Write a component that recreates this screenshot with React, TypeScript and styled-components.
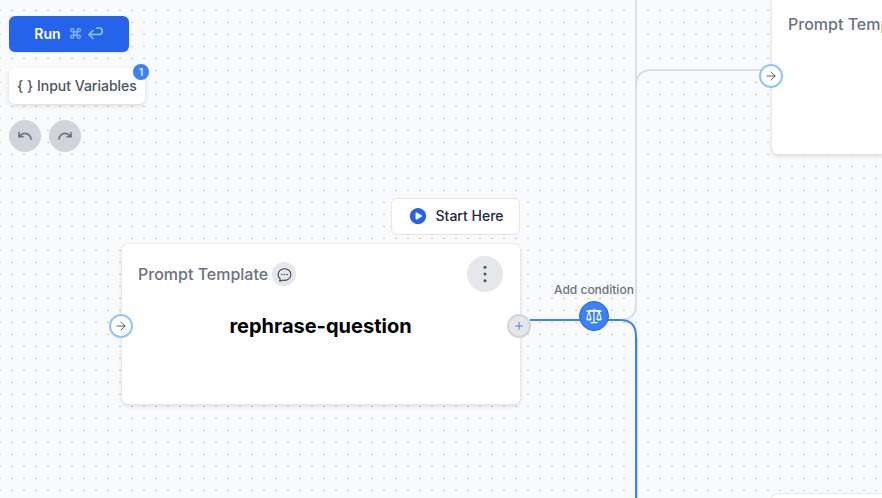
import React from 'react';
import styled, { createGlobalStyle } from 'styled-components';
import { Command, Plus, ArrowRight, Undo, Redo } from 'lucide-react';
import { HiPlayCircle, HiOutlineChatBubbleOvalLeftEllipsis, HiScale } from 'react-icons/hi2';

const GlobalStyle = createGlobalStyle`
  html, body {
    margin: 0;
    padding: 0;
    overflow: hidden;
  }
  body {
    font-family: 'Inter', 'Liberation Sans', sans-serif;
  }
`;

const ReturnIcon = () => (
  <svg width="16" height="13" viewBox="0 0 16 13" fill="none" stroke="currentColor" strokeWidth="1.6" strokeLinecap="round" strokeLinejoin="round">
    <path d="M1 7.5H11a3.2 3.2 0 0 0 0-6.5H8.5" />
    <path d="M5 3.5L1 7.5L5 11.5" />
  </svg>
);

const KebabIcon = () => (
  <svg width="4" height="18" viewBox="0 0 4 18" fill="#4b5563">
    <circle cx="2" cy="2.3" r="1.5" />
    <circle cx="2" cy="9" r="1.5" />
    <circle cx="2" cy="15.7" r="1.5" />
  </svg>
);

const App = () => {
  return (
    <Canvas>
      <GlobalStyle />
      <Edges width={882} height={498} viewBox="0 0 882 498" fill="none">
        <path d="M636 0V304Q636 320 620 320H600" stroke="#dcdee2" strokeWidth="2" />
        <path d="M636 304V86Q636 70 652 70H762" stroke="#dcdee2" strokeWidth="2" />
        <path d="M637.5 338V498" stroke="#bfdbfe" strokeWidth="1" />
        <path d="M530 320H620Q636 320 636 336V498" stroke="#3b82f6" strokeWidth="2" />
      </Edges>

      <Toolbar>
        <RunButton>
          Run
          <RunKeys>
            <Command size={13} strokeWidth={2} />
            <ReturnIcon />
          </RunKeys>
        </RunButton>
        <VariablesButton>
          <span>{'{ }'}</span> Input Variables
          <Badge>1</Badge>
        </VariablesButton>
        <HistoryRow>
          <HistoryButton>
            <Undo size={16} strokeWidth={2.4} />
          </HistoryButton>
          <HistoryButton>
            <Redo size={16} strokeWidth={2.4} />
          </HistoryButton>
        </HistoryRow>
      </Toolbar>

      <StartHere>
        <HiPlayCircle size={20} color="#2563eb" />
        Start Here
      </StartHere>

      <Node $left={121.5} $top={243.5}>
        <NodeHeader>
          <NodeTitle>Prompt Template</NodeTitle>
          <ChatBadge>
            <HiOutlineChatBubbleOvalLeftEllipsis size={17} />
          </ChatBadge>
          <MenuButton>
            <KebabIcon />
          </MenuButton>
        </NodeHeader>
        <NodeName>rephrase-question</NodeName>
      </Node>
      <InputHandle $left={109} $top={314}>
        <ArrowRight size={14} strokeWidth={1.6} />
      </InputHandle>
      <OutputHandle>
        <Plus size={12} strokeWidth={1.5} />
      </OutputHandle>

      <ConditionLabel>Add condition</ConditionLabel>
      <ConditionButton>
        <HiScale size={18} />
      </ConditionButton>

      <Node $left={771.5} $top={-6.5}>
        <NodeHeader>
          <NodeTitle>Prompt Template</NodeTitle>
        </NodeHeader>
      </Node>
      <InputHandle $left={759} $top={64}>
        <ArrowRight size={14} strokeWidth={1.6} />
      </InputHandle>

      <Node $left={771.5} $top={493.5} />
    </Canvas>
  );
};

export default App;

const Canvas = styled.div`
  position: relative;
  width: 882px;
  height: 498px;
  overflow: hidden;
  background-color: #f9fafb;

  &::before {
    content: '';
    position: absolute;
    inset: 0;
    background-image: linear-gradient(#c3c6cb 1px, transparent 1px);
    background-size: 12px 12px;
    background-position: 0 10px;
    mask-image: linear-gradient(90deg, #000 2px, transparent 2px);
    mask-size: 12px 12px;
    mask-position: -1px 0;
  }
`;

const Edges = styled.svg`
  position: absolute;
  top: 0;
  left: 0;
`;

const Toolbar = styled.div`
  position: absolute;
  top: 16px;
  left: 9px;
  display: flex;
  flex-direction: column;
  align-items: flex-start;
  gap: 16px;
`;

const RunButton = styled.button`
  width: 120px;
  height: 36px;
  border: 0;
  border-radius: 6px;
  background: #2563eb;
  color: #fff;
  font-family: inherit;
  font-size: 14px;
  font-weight: 600;
  padding: 0 0 2px;
  display: flex;
  align-items: center;
  justify-content: center;
  gap: 8px;
  box-shadow: 0 1px 2px rgba(0, 0, 0, 0.1);
`;

const RunKeys = styled.span`
  display: flex;
  align-items: center;
  gap: 6px;
  color: #93c5fd;
`;

const VariablesButton = styled.button`
  position: relative;
  width: 136px;
  height: 36px;
  border: 0;
  border-radius: 6px;
  background: #fff;
  color: #4b5563;
  font-family: inherit;
  font-size: 14px;
  font-weight: 500;
  white-space: nowrap;
  padding: 0 0 2px;
  box-shadow: 0 2px 5px rgba(0, 0, 0, 0.12);
`;

const Badge = styled.span`
  position: absolute;
  top: -4px;
  right: -4px;
  width: 16px;
  height: 16px;
  border-radius: 50%;
  background: #3b82f6;
  color: #fff;
  font-size: 10px;
  font-weight: 500;
  display: flex;
  align-items: center;
  justify-content: center;
`;

const HistoryRow = styled.div`
  display: flex;
  gap: 8px;
`;

const HistoryButton = styled.button`
  width: 32px;
  height: 32px;
  padding: 0;
  border: 0;
  border-radius: 50%;
  background: #d1d5db;
  color: #6b7280;
  display: flex;
  align-items: center;
  justify-content: center;
`;

const StartHere = styled.div`
  position: absolute;
  left: 391px;
  top: 198px;
  width: 129px;
  height: 37px;
  box-sizing: border-box;
  padding: 0 0 2px 0;
  border: 1px solid #e5e7eb;
  border-radius: 6px;
  background: #fff;
  color: #1f2937;
  font-size: 14px;
  font-weight: 500;
  display: flex;
  align-items: center;
  justify-content: center;
  gap: 8px;
`;

const Node = styled.div<{ $left: number; $top: number }>`
  position: absolute;
  left: ${(p) => p.$left}px;
  top: ${(p) => p.$top}px;
  width: 398px;
  height: 160px;
  box-sizing: border-box;
  padding: 12.5px 16.5px;
  background: #fff;
  border-radius: 6px;
  box-shadow: 0 0 0 1px rgba(229, 231, 235, 0.7), 0 2px 4px rgba(0, 0, 0, 0.13);
`;

const NodeHeader = styled.div`
  display: flex;
  align-items: center;
  gap: 4px;
  height: 36px;
`;

const NodeTitle = styled.span`
  color: #6b7280;
  font-size: 16px;
  font-weight: 500;
  white-space: nowrap;
`;

const ChatBadge = styled.span`
  width: 24px;
  height: 24px;
  border-radius: 50%;
  background: #e5e7eb;
  color: #374151;
  display: flex;
  align-items: center;
  justify-content: center;
`;

const MenuButton = styled.span`
  margin-left: auto;
  width: 36px;
  height: 36px;
  border-radius: 50%;
  background: #e5e7eb;
  display: flex;
  align-items: center;
  justify-content: center;
`;

const NodeName = styled.div`
  margin-top: 22px;
  color: #000;
  font-size: 20px;
  font-weight: 700;
  line-height: 24px;
  text-align: center;
`;

const InputHandle = styled.div<{ $left: number; $top: number }>`
  position: absolute;
  left: ${(p) => p.$left}px;
  top: ${(p) => p.$top}px;
  width: 24px;
  height: 24px;
  box-sizing: border-box;
  border: 2px solid #93c5fd;
  border-radius: 50%;
  background: #fff;
  color: #4b5563;
  display: flex;
  align-items: center;
  justify-content: center;
`;

const OutputHandle = styled.div`
  position: absolute;
  left: 507px;
  top: 314px;
  width: 24px;
  height: 24px;
  box-sizing: border-box;
  border: 2px solid #d1d5db;
  border-radius: 50%;
  background: #e5e7eb;
  color: #2563eb;
  display: flex;
  align-items: center;
  justify-content: center;
`;

const ConditionLabel = styled.div`
  position: absolute;
  left: 554px;
  top: 283px;
  color: #6b7280;
  font-size: 12px;
  font-weight: 500;
  line-height: 14px;
  white-space: nowrap;
`;

const ConditionButton = styled.div`
  position: absolute;
  left: 579px;
  top: 301px;
  width: 30px;
  height: 30px;
  box-sizing: border-box;
  border: 1px solid #2563eb;
  border-radius: 50%;
  background: #3b82f6;
  color: #fff;
  display: flex;
  align-items: center;
  justify-content: center;
`;
